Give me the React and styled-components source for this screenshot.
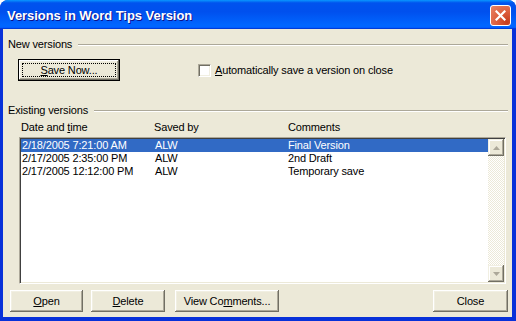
import React from "react";
import styled, { createGlobalStyle } from "styled-components";

const Global = createGlobalStyle`
  html, body { margin: 0; padding: 0; background: #fff; }
  body { font-family: "Liberation Sans", Arial, sans-serif; }
`;

const FONT = `11px "Liberation Sans", Arial, sans-serif`;

const Window = styled.div`
  width: 516px;
  height: 321px;
  box-sizing: border-box;
  display: flex;
  flex-direction: column;
  border-radius: 8px 8px 0 0;
  background: #0831d9;
  overflow: hidden;
`;

const TitleBar = styled.div`
  height: 29px;
  flex: none;
  display: flex;
  align-items: center;
  padding: 0 5px 0 7px;
  background: linear-gradient(
    to bottom,
    #0997ff 0%,
    #0053ee 10%,
    #0050ee 40%,
    #0066ff 86%,
    #0066ff 92%,
    #005bff 95%,
    #003dd7 97%,
    #003dd7 100%
  );
`;

const Title = styled.div`
  flex: 1;
  color: #fff;
  font: bold 13px "Liberation Sans", Arial, sans-serif;
  letter-spacing: -0.05px;
  text-shadow: 1px 1px #0f1089;
  margin-top: 1px;
`;

const CloseBtn = styled.div`
  width: 21px;
  height: 21px;
  box-sizing: border-box;
  border: 1px solid #fff;
  border-radius: 3px;
  background: radial-gradient(circle at 85% 85%, #c63d1e 0%, #dc5d3c 45%, #e88466 100%);
  display: flex;
  align-items: center;
  justify-content: center;
  margin-top: 1px;
`;

const Client = styled.div`
  flex: 1;
  margin: 0 4px 4px 3px;
  background: #ece9d8;
  display: flex;
  flex-direction: column;
  padding: 8px 4px 5px 5px;
  font: ${FONT};
  letter-spacing: -0.15px;
  color: #000;
`;

const GroupHeader = styled.div`
  display: flex;
  align-items: center;
  height: 14px;
  gap: 6px;
  margin-top: ${(p) => p.$mt || 0}px;
  white-space: nowrap;
`;

const Etch = styled.div`
  flex: 1;
  height: 0;
  border-top: 1px solid #aca899;
  border-bottom: 1px solid #fff;
  margin-top: 1px;
`;

const NewRow = styled.div`
  display: flex;
  align-items: center;
  margin: 8px 0 0 10px;
`;

const Button = styled.div`
  box-sizing: border-box;
  width: ${(p) => p.$w}px;
  height: 22px;
  flex: none;
  display: flex;
  align-items: center;
  justify-content: center;
  background: #ece9d8;
  white-space: nowrap;
  box-shadow: inset -1px -1px #716f64, inset 1px 1px #fff, inset -2px -2px #aca899,
    inset 2px 2px #f1efe2;
  position: relative;
`;

const DefaultButton = styled(Button)`
  border: 1px solid #000;
  &::after {
    content: "";
    position: absolute;
    inset: 3px;
    border: 1px dotted #000;
  }
`;

const CheckLabel = styled.div`
  display: flex;
  align-items: center;
  gap: 4px;
  margin-left: 78px;
`;

const CheckBox = styled.div`
  width: 13px;
  height: 13px;
  box-sizing: border-box;
  background: #fff;
  border-top: 1px solid #aca899;
  border-left: 1px solid #aca899;
  border-right: 1px solid #fff;
  border-bottom: 1px solid #fff;
  box-shadow: inset 1px 1px #716f64, inset -1px -1px #f1efe2;
`;

const Columns = styled.div`
  display: grid;
  grid-template-columns: 133px 134px 1fr;
  margin: 4px 0 0 13px;
  height: 13px;
  line-height: 13px;
`;

const ListBox = styled.div`
  margin: 3px 2px 0 11px;
  height: 147px;
  box-sizing: border-box;
  background: #fff;
  border-top: 1px solid #aca899;
  border-left: 1px solid #aca899;
  border-right: 1px solid #fff;
  border-bottom: 1px solid #fff;
  box-shadow: inset 1px 1px #404040, inset -1px -1px #ece9d8;
  padding: 1px;
  display: flex;
`;

const Rows = styled.div`
  flex: 1;
  display: flex;
  flex-direction: column;
`;

const Row = styled.div`
  display: grid;
  grid-template-columns: 133px 133px 1fr;
  height: 13px;
  line-height: 13px;
  padding-left: 1px;
  background: ${(p) => (p.$sel ? "#316ac5" : "transparent")};
  color: ${(p) => (p.$sel ? "#fff" : "#000")};
  white-space: nowrap;
`;

const ScrollBar = styled.div`
  width: 16px;
  display: flex;
  flex-direction: column;
  justify-content: space-between;
  background: repeating-conic-gradient(#ece9d8 0% 25%, #fff 0% 50%) 0 0 / 2px 2px;
`;

const ArrowBtn = styled.div`
  width: 16px;
  height: 17px;
  box-sizing: border-box;
  background: #ece9d8;
  box-shadow: inset -1px -1px #716f64, inset 1px 1px #f1efe2, inset -2px -2px #aca899,
    inset 2px 2px #fff;
  display: flex;
  align-items: center;
  justify-content: center;
`;

const BottomRow = styled.div`
  display: flex;
  align-items: center;
  margin: 6px 0 0 2px;
`;

const Spacer = styled.div`
  flex: 1;
`;

const Gap = styled.div`
  width: ${(p) => p.$w}px;
  flex: none;
`;

const rows = [
  ["2/18/2005 7:21:00 AM", "ALW", "Final Version"],
  ["2/17/2005 2:35:00 PM", "ALW", "2nd Draft"],
  ["2/17/2005 12:12:00 PM", "ALW", "Temporary save"],
];

const Tri = ({ up }) => (
  <svg width="7" height="4" viewBox="0 0 7 4">
    <path d={up ? "M3.5 0 L7 4 L0 4 Z" : "M0 0 L7 0 L3.5 4 Z"} fill="#aca899" />
  </svg>
);

export default function App() {
  return (
    <>
      <Global />
      <Window>
        <TitleBar>
          <Title>Versions in Word Tips Version</Title>
          <CloseBtn>
            <svg width="11" height="11" viewBox="0 0 11 11">
              <path d="M1.5 1.5 L9.5 9.5 M9.5 1.5 L1.5 9.5" stroke="#fff" strokeWidth="2.2" strokeLinecap="square" />
            </svg>
          </CloseBtn>
        </TitleBar>
        <Client>
          <GroupHeader>
            New versions
            <Etch />
          </GroupHeader>
          <NewRow>
            <DefaultButton $w={102}>
              <span>
                <u>S</u>ave Now...
              </span>
            </DefaultButton>
            <CheckLabel>
              <CheckBox />
              <span>
                <u>A</u>utomatically save a version on close
              </span>
            </CheckLabel>
          </NewRow>
          <GroupHeader $mt={22}>
            Existing versions
            <Etch />
          </GroupHeader>
          <Columns>
            <span>
              Date and <u>t</u>ime
            </span>
            <span>Saved by</span>
            <span>Comments</span>
          </Columns>
          <ListBox>
            <Rows>
              {rows.map((r, i) => (
                <Row key={i} $sel={i === 0}>
                  <span>{r[0]}</span>
                  <span>{r[1]}</span>
                  <span>{r[2]}</span>
                </Row>
              ))}
            </Rows>
            <ScrollBar>
              <ArrowBtn>
                <Tri up />
              </ArrowBtn>
              <ArrowBtn>
                <Tri />
              </ArrowBtn>
            </ScrollBar>
          </ListBox>
          <BottomRow>
            <Button $w={73}>
              <span>
                <u>O</u>pen
              </span>
            </Button>
            <Gap $w={8} />
            <Button $w={74}>
              <span>
                <u>D</u>elete
              </span>
            </Button>
            <Gap $w={10} />
            <Button $w={104}>
              <span>
                View Co<u>m</u>ments...
              </span>
            </Button>
            <Spacer />
            <Button $w={75}>Close</Button>
          </BottomRow>
        </Client>
      </Window>
    </>
  );
}
